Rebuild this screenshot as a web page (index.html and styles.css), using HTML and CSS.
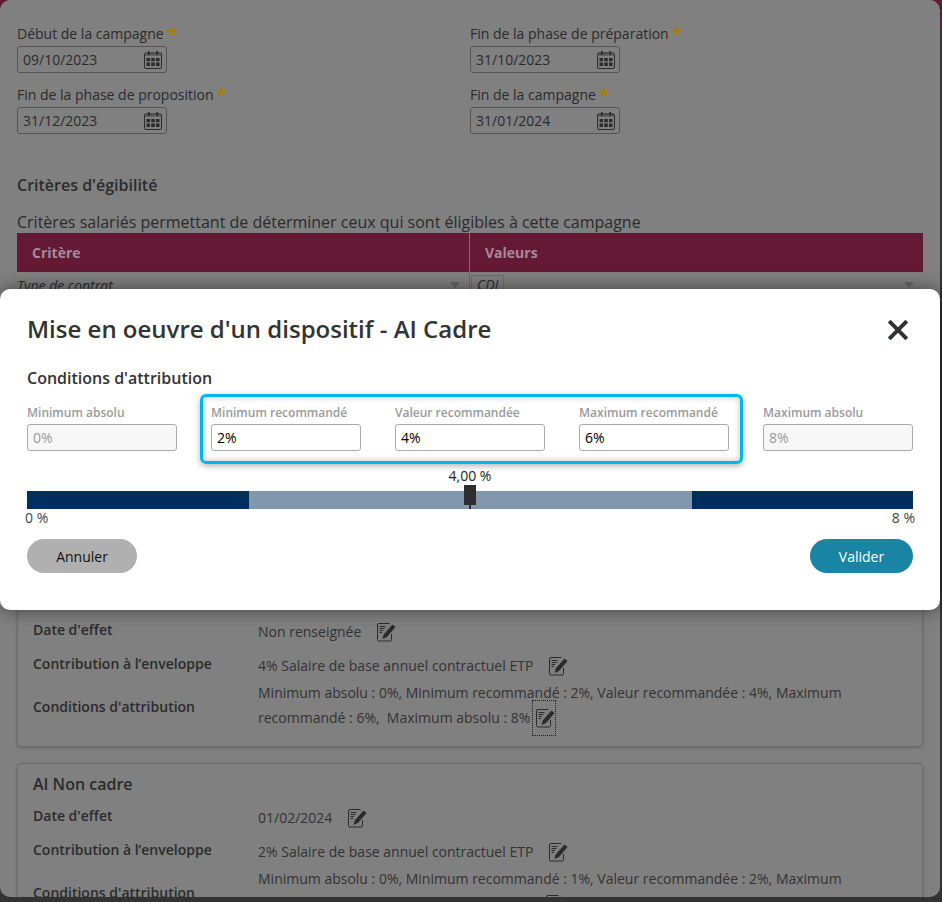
FILE: index.html
```html
<!DOCTYPE html>
<html lang="fr">
<head>
  <meta charset="UTF-8">
  <title>Mise en oeuvre d'un dispositif</title>
  <meta name="viewport" content="width=device-width, initial-scale=1">
  <link rel="stylesheet" href="styles.css">
</head>
<body>

  <svg class="sprite" aria-hidden="true">
    <symbol id="ico-cal" viewBox="0 0 20 20">
      <rect x="1.5" y="3" width="17" height="15.5" rx="1.5" fill="none" stroke="currentColor" stroke-width="1"/>
      <rect x="1.5" y="3" width="17" height="3" fill="currentColor" opacity=".35"/>
      <rect x="5" y="1" width="1.6" height="4" fill="currentColor"/>
      <rect x="13.4" y="1" width="1.6" height="4" fill="currentColor"/>
      <path d="M3.5 8h3.5v3.2H3.5zM8.2 8h3.6v3.2H8.200zM13 8h3.500v3.2H13zM3.500 12.500h3.500v3.500H3.500zM8.200 12.500h3.600v3.500H8.200zM13 12.500h3.500v3.500H13z" fill="currentColor"/>
    </symbol>
    <symbol id="ico-edit" viewBox="0 0 20 20">
      <path d="M13.500 1.500H3A1.500 1.500 0 0 0 1.500 3v14.500A1.500 1.500 0 0 0 3 19h11a1.500 1.500 0 0 0 1.500-1.500V12" fill="none" stroke="currentColor" stroke-width="1"/>
      <path d="M3.500 4.500h6M3.500 6.500h5M3.500 8.500h3.500M3.500 10.500h2.500" stroke="currentColor" stroke-width="1"/>
      <path d="M16.500 2.500l3 2.500L11 15l-4.500 2 1.200-4.500z" fill="currentColor"/>
    </symbol>
  </svg>

  <div class="page">
    <div class="dates">
      <div class="field">
        <label>Début de la campagne <span class="req">*</span></label>
        <div class="date-input"><span>09/10/2023</span><svg class="cal"><use href="#ico-cal"/></svg></div>
      </div>
      <div class="field">
        <label>Fin de la phase de préparation <span class="req">*</span></label>
        <div class="date-input"><span>31/10/2023</span><svg class="cal"><use href="#ico-cal"/></svg></div>
      </div>
      <div class="field">
        <label>Fin de la phase de proposition <span class="req">*</span></label>
        <div class="date-input"><span>31/12/2023</span><svg class="cal"><use href="#ico-cal"/></svg></div>
      </div>
      <div class="field">
        <label>Fin de la campagne <span class="req">*</span></label>
        <div class="date-input"><span>31/01/2024</span><svg class="cal"><use href="#ico-cal"/></svg></div>
      </div>
    </div>

    <h3 class="section-title">Critères d'égibilité</h3>
    <p class="section-intro">Critères salariés permettant de déterminer ceux qui sont éligibles à cette campagne</p>

    <div class="criteria">
      <div class="criteria-head"><div>Critère</div><div>Valeurs</div></div>
      <div class="criteria-row">
        <div class="crit-name">Type de contrat<span class="arrow"></span></div>
        <div class="crit-val"><span class="chip">CDI</span><span class="arrow"></span></div>
      </div>
    </div>

    <div class="card">
      <h4>AI Cadre</h4>
      <div class="row">
        <div class="row-label">Date d'effet</div>
        <div class="row-value">Non renseignée<svg class="edit"><use href="#ico-edit"/></svg></div>
      </div>
      <div class="row">
        <div class="row-label">Contribution à l’enveloppe</div>
        <div class="row-value">4% Salaire de base annuel contractuel ETP<svg class="edit"><use href="#ico-edit"/></svg></div>
      </div>
      <div class="row row-long">
        <div class="row-label">Conditions d'attribution</div>
        <div class="row-value">Minimum absolu : 0%, Minimum recommandé : 2%, Valeur recommandée : 4%, Maximum recommandé : 6%,&nbsp; Maximum absolu : 8%<span class="focus"><svg class="edit"><use href="#ico-edit"/></svg></span></div>
      </div>
    </div>

    <div class="card">
      <h4>AI Non cadre</h4>
      <div class="row">
        <div class="row-label">Date d'effet</div>
        <div class="row-value">01/02/2024<svg class="edit"><use href="#ico-edit"/></svg></div>
      </div>
      <div class="row">
        <div class="row-label">Contribution à l’enveloppe</div>
        <div class="row-value">2% Salaire de base annuel contractuel ETP<svg class="edit"><use href="#ico-edit"/></svg></div>
      </div>
      <div class="row row-long">
        <div class="row-label">Conditions d'attribution</div>
        <div class="row-value">Minimum absolu : 0%, Minimum recommandé : 1%, Valeur recommandée : 2%, Maximum recommandé : 3%,&nbsp; Maximum absolu : 4%<svg class="edit"><use href="#ico-edit"/></svg></div>
      </div>
    </div>
  </div>

  <!-- Modale -->
  <div class="modal">
    <div class="modal-head">
      <h2>Mise en oeuvre d'un dispositif - AI Cadre</h2>
      <svg class="close" viewBox="0 0 20 20"><path d="M2 2l16 16M18 2L2 18" fill="none" stroke="currentColor" stroke-width="3.600"/></svg>
    </div>

    <h3>Conditions d'attribution</h3>

    <div class="values">
      <div class="val-field disabled">
        <label>Minimum absolu</label>
        <input type="text" value="0%" disabled>
      </div>
      <div class="highlight">
        <div class="val-field">
          <label>Minimum recommandé</label>
          <input type="text" value="2%">
        </div>
        <div class="val-field">
          <label>Valeur recommandée</label>
          <input type="text" value="4%">
        </div>
        <div class="val-field">
          <label>Maximum recommandé</label>
          <input type="text" value="6%">
        </div>
      </div>
      <div class="val-field disabled">
        <label>Maximum absolu</label>
        <input type="text" value="8%" disabled>
      </div>
    </div>

    <div class="slider">
      <div class="slider-value">4,00 %</div>
      <div class="track">
        <div class="seg seg-out"></div>
        <div class="seg seg-in"></div>
        <div class="seg seg-out"></div>
        <div class="handle"></div>
      </div>
      <div class="slider-ends"><span>0 %</span><span>8 %</span></div>
    </div>

    <div class="actions">
      <button class="btn btn-cancel">Annuler</button>
      <button class="btn btn-ok">Valider</button>
    </div>
  </div>

</body>
</html>
```

FILE: styles.css
```css
* { box-sizing: border-box; }

html, body {
  height: 100%;
  overflow: hidden;
}

body {
  margin: 0;
  font-family: "Open Sans", sans-serif;
  font-size: 14px;
  color: #2b2b2b;
  background: linear-gradient(#641a35 0, #641a35 30px, #333 30px);
}

.sprite {
  display: none;
}

/* page dimmed behind the modal */
.page {
  width: 940px;
  height: 897px;
  padding: 24px 17px 0;
  background: #808080;
  border-radius: 10px;
  overflow: hidden;
}

.dates {
  display: grid;
  grid-template-columns: 453px 1fr;
  row-gap: 12px;
}

.field label {
  display: block;
  line-height: 20px;
  margin-bottom: 2px;
}

.req {
  color: #a87e00;
  font-size: 18px;
  font-weight: 700;
  line-height: 14px;
  vertical-align: -2px;
}

.date-input {
  width: 150px;
  height: 27px;
  padding: 0 3px 0 5px;
  display: flex;
  align-items: center;
  justify-content: space-between;
  border: 1px solid #555;
  border-radius: 3px;
}

.cal {
  width: 20px;
  height: 20px;
  color: #2b2b2b;
}

.section-title {
  margin: 41px 0 0;
  font-size: 16px;
  font-weight: 600;
  line-height: 20px;
}

.section-intro {
  margin: 17px 0 0;
  font-size: 16px;
  line-height: 21px;
}

.criteria {
  margin-bottom: 279px;
}

.criteria-head {
  display: grid;
  grid-template-columns: 452px 1fr;
  height: 39px;
  background: #641a35;
  color: #a8889a;
  font-weight: 700;
}

.criteria-head div {
  padding-left: 15px;
  line-height: 39px;
}

.criteria-head div + div {
  border-left: 1px solid #8a6a78;
}

.criteria-row {
  display: grid;
  grid-template-columns: 452px 1fr;
  height: 26px;
  font-style: italic;
}

.crit-name, .crit-val {
  display: flex;
  justify-content: space-between;
  align-items: center;
  padding-right: 9px;
}

.crit-val {
  border-left: 1px solid #6d6d6d;
}

.chip {
  margin-left: 1px;
  padding: 0 5px;
  line-height: 18px;
  border: 1px solid #6d6d6d;
}

.arrow {
  width: 0;
  height: 0;
  border: 5px solid transparent;
  border-top: 6px solid #666;
  border-bottom: 0;
}

.card {
  margin-bottom: 16px;
  padding: 9px 15px 0;
  height: 170px;
  border: 1px solid #6c6c6c;
  border-radius: 4px;
  box-shadow: 0 1px 3px rgba(0, 0, 0, 0.2);
}

.card h4 {
  margin: 0 0 5px;
  font-size: 16px;
  font-weight: 600;
  line-height: 22px;
}

.row {
  display: grid;
  grid-template-columns: 225px 1fr;
  align-items: center;
  min-height: 34px;
}

.row-label {
  font-weight: 600;
  margin-top: -4px;
}

.row-value {
  line-height: 25px;
  color: #333;
}

.row-long {
  margin-top: -2px;
}

.row-long .row-label {
  margin-top: 2px;
}

.row-long .row-value {
  padding-right: 30px;
}

.edit {
  width: 20px;
  height: 20px;
  margin-left: 15px;
  vertical-align: -5px;
  color: #2b2b2b;
}

.focus {
  position: relative;
  margin-left: 5px;
}

.focus .edit {
  margin-left: 0;
}

/* dotted focus ring around the icon */
.focus::after {
  content: "";
  position: absolute;
  left: -3px;
  right: -1px;
  top: -8px;
  bottom: -9px;
  border: 1px dotted #222;
}

/* modal */
.modal {
  position: absolute;
  top: 289px;
  left: 0;
  width: 940px;
  height: 321px;
  padding: 0 27px;
  background: #fff;
  border-radius: 10px;
  box-shadow: 0 0 18px rgba(0, 0, 0, 0.5);
}

.modal-head {
  display: flex;
  justify-content: space-between;
  align-items: center;
  height: 78px;
}

.modal-head h2 {
  margin: 0;
  font-size: 24px;
  font-weight: 600;
  color: #333;
}

.close {
  width: 22px;
  height: 22px;
  margin-top: 4px;
  margin-right: 4px;
  color: #2f3236;
}

.modal > h3 {
  margin: 2px 0 0;
  font-size: 16px;
  font-weight: 600;
  line-height: 18px;
  color: #333;
}

.values {
  display: flex;
  margin-top: 7px;
}

.val-field {
  width: 150px;
  flex: none;
}

.val-field label {
  display: block;
  margin-bottom: 3px;
  font-size: 12px;
  font-weight: 600;
  line-height: 16px;
  color: #9a9a9a;
}

.val-field input {
  display: block;
  width: 150px;
  height: 27px;
  padding: 0 5px;
  border: 1px solid #aaa;
  border-radius: 3px;
  font-family: inherit;
  font-size: 14px;
  color: #000;
}

.val-field input:disabled {
  background: #f7f7f7;
  color: #999;
}

.highlight {
  display: flex;
  gap: 34px;
  flex: none;
  width: 543px;
  height: 70px;
  margin: 0 20px 0 23px;
  padding: 8px 11px 0 8px;
  border: 3px solid #00b5ef;
  border-radius: 6px;
  box-shadow: 0 2px 6px rgba(0, 0, 0, 0.3), inset 0 0 6px rgba(0, 0, 0, 0.25);
}

.values > .val-field {
  padding-top: 11px;
}

.slider {
  margin-top: 2px;
}

.slider-value {
  text-align: center;
  line-height: 20px;
  color: #222;
}

.track {
  position: relative;
  display: flex;
  height: 18px;
  margin-top: 5px;
}

.seg-out {
  width: 222px;
  background: #002e5f;
}

.seg-out:last-of-type {
  width: auto;
  flex: 1;
}

.seg-in {
  flex: none;
  width: 443px;
  background: #8197ae;
}

.handle {
  position: absolute;
  left: 437px;
  top: -6px;
  width: 12px;
  height: 20px;
  background: #2e2e2e;
}

.handle::after {
  content: "";
  position: absolute;
  left: 5px;
  top: 20px;
  width: 2px;
  height: 4px;
  background: #2e2e2e;
}

.slider-ends {
  display: flex;
  justify-content: space-between;
  margin: 0 -2px;
  line-height: 17px;
  color: #444;
}

.actions {
  display: flex;
  justify-content: space-between;
  margin-top: 13px;
}

.btn {
  height: 34px;
  border: none;
  border-radius: 17px;
  font-family: inherit;
  font-size: 14px;
}

.btn-cancel {
  width: 110px;
  background: #b0b0b0;
  color: #111;
}

.btn-ok {
  width: 103px;
  background: #1a84a4;
  color: #fff;
}
```
